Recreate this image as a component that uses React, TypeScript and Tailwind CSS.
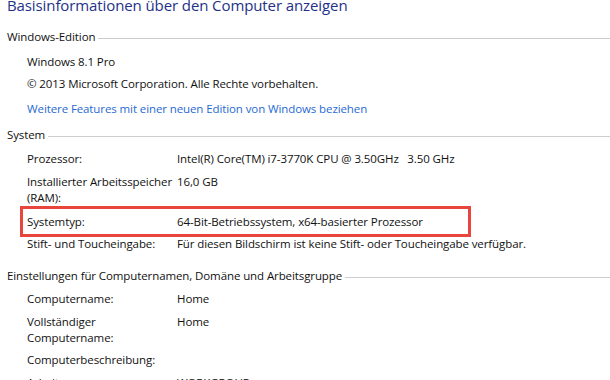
import React from "react";

const Header = ({ children, className = "" }: { children: React.ReactNode; className?: string }) => (
  <div className={`flex items-center pl-[7px] ${className}`}>
    <span className="whitespace-nowrap">{children}</span>
    <div className="ml-[3px] mt-[2px] h-px flex-1 bg-[#cdcdcd]" />
  </div>
);

const Row = ({
  label,
  value,
  className = "",
}: {
  label: React.ReactNode;
  value?: React.ReactNode;
  className?: string;
}) => (
  <div className={`grid grid-cols-[150px_1fr] pl-[27px] ${className}`}>
    <div>{label}</div>
    <div className="whitespace-pre">{value}</div>
  </div>
);

export default function App() {
  return (
    <div className="relative h-[380px] w-[610px] overflow-hidden bg-white font-['Open_Sans',_'Noto_Sans',_sans-serif] text-[11.5px] leading-4 tracking-[-0.1px] text-[#111]">
      <div className="-mt-[5px] pl-[7px] text-[15px] leading-[20px] tracking-[-0.1px] text-[#1e3287]">
        Basisinformationen über den Computer anzeigen
      </div>

      <Header className="mt-[14px]">Windows-Edition</Header>
      <div className="mt-[9px] pl-[27px]">Windows 8.1 Pro</div>
      <div className="mt-[6px] pl-[27px]">© 2013 Microsoft Corporation. Alle Rechte vorbehalten.</div>
      <div className="mt-[9px] pl-[27px] text-[#1f6ad4]">
        Weitere Features mit einer neuen Edition von Windows beziehen
      </div>

      <Header className="mt-[10px]">System</Header>
      <Row className="mt-[8px]" label="Prozessor:" value={"Intel(R) Core(TM) i7-3770K CPU @ 3.50GHz   3.50 GHz"} />
      <Row
        className="mt-[7px]"
        label={
          <>
            Installierter Arbeitsspeicher
            <br />
            (RAM):
          </>
        }
        value="16,0 GB"
      />
      <div className="relative mt-[8px]">
        <Row label="Systemtyp:" value="64-Bit-Betriebssystem, x64-basierter Prozessor" />
        <div className="absolute left-[20px] top-[-8px] z-10 h-[31px] w-[451px] border-[3px] border-[#e8453c]" />
      </div>
      <Row
        className="mt-[6px]"
        label="Stift- und Toucheingabe:"
        value="Für diesen Bildschirm ist keine Stift- oder Toucheingabe verfügbar."
      />

      <Header className="mt-[16px]">Einstellungen für Computernamen, Domäne und Arbeitsgruppe</Header>
      <Row className="mt-[7px]" label="Computername:" value="Home" />
      <Row
        className="mt-[7px]"
        label={
          <>
            Vollständiger
            <br />
            Computername:
          </>
        }
        value="Home"
      />
      <Row className="mt-[6px]" label="Computerbeschreibung:" />
      <Row className="mt-[7px]" label="Arbeitsgruppe:" value="WORKGROUP" />
    </div>
  );
}
